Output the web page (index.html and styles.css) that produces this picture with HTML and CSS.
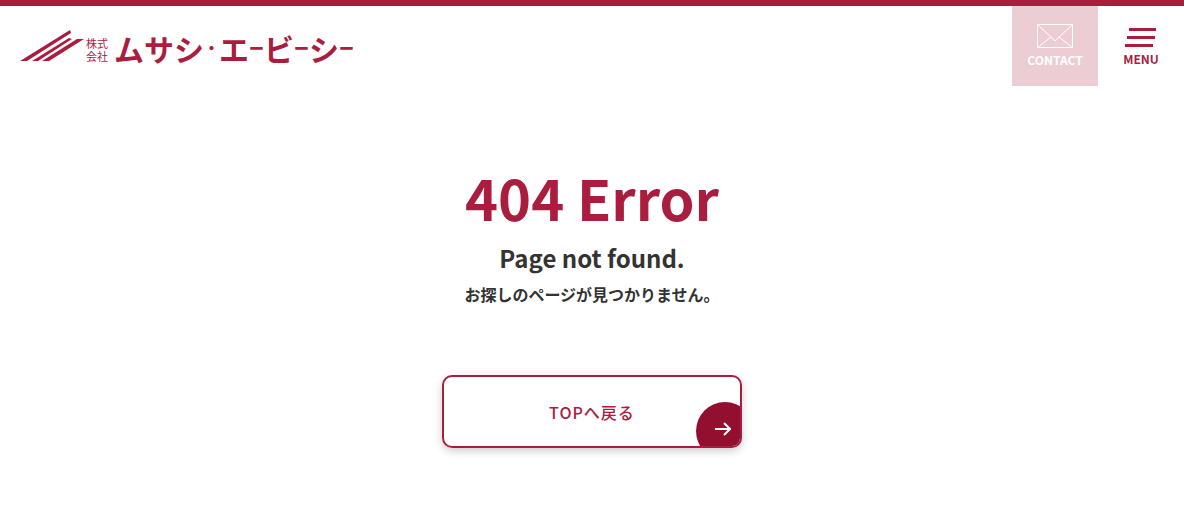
FILE: index.html
```html
<!DOCTYPE html>
<html lang="ja">
<head>
    <meta charset="UTF-8">
    <meta name="viewport" content="width=device-width, initial-scale=1.0">
    <title>404 Error | 株式会社ムサシ・エービーシー</title>
    <link rel="stylesheet" href="styles.css">
</head>
<body>
    <header class="header">
        <a href="/" class="logo">
            <svg class="logo-mark" viewBox="0 0 64 32" width="64" height="32" fill="currentColor" aria-hidden="true">
                <path d="M0 31 50 0l1 3L7 31z"/>
                <path d="M12 31 49 8l3 1L18 31z"/>
                <path d="M22 31 57 9h7L29 31z"/>
            </svg>
            <span class="logo-prefix">株式<br>会社</span>
            <span class="logo-name">ムサシ<small>・</small>エ<small>ー</small>ビ<small>ー</small>シ<small>ー</small></span>
        </a>
        <nav class="header-nav">
            <a href="/contact/" class="contact">
                <svg viewBox="0 0 36 24" width="36" height="24" fill="none" stroke="currentColor" aria-hidden="true">
                    <path d="M.5.5h35v23H.5zM.5.5 18 17 35.5.5M.5 23.500 14 13M35.500 23.500 22 13"/>
                </svg>
                CONTACT
            </a>
            <button type="button" class="menu">
                <svg viewBox="0 0 32 20" width="32" height="20" fill="currentColor" aria-hidden="true">
                    <path d="M4 0h27v3H4zM2 8h28v3H2zM0 16h28v3H0z"/>
                </svg>
                MENU
            </button>
        </nav>
    </header>

    <main class="error">
        <h1>404 Error</h1>
        <h2>Page not found.</h2>
        <p>お探しのページが見つかりません。</p>
        <a href="/" class="button">
            TOPへ戻る
            <span class="button-arrow">
                <svg viewBox="0 0 16 14" width="16" height="14" fill="none" stroke="currentColor" stroke-width="2" aria-hidden="true">
                    <path d="M0 7h15M9 1l6 6-6 6"/>
                </svg>
            </span>
        </a>
    </main>
</body>
</html>
```
FILE: styles.css
```css
* {
    box-sizing: border-box;
}
body {
    margin: 0;
    border-top: 6px solid #ab1d3f;
    background-color: #fff;
    color: #333;
    font-family: "Noto Sans CJK JP", sans-serif;
    font-size: 16px;
}
a {
    color: inherit;
    text-decoration: none;
}
.header {
    display: flex;
    justify-content: space-between;
    color: #ab1d3f;
}
.logo {
    display: flex;
    align-items: center;
    height: 80px;
    padding-left: 20px;
}
.logo-prefix {
    margin: 7px 6px 0 2px;
    font-size: 11px;
    line-height: 13px;
}
.logo-name {
    display: flex;
    align-items: center;
    margin-top: 4px;
    font-size: 30px;
    font-weight: bold;
    line-height: 32px;
}
.logo-name small {
    font-size: 15px;
    font-weight: 900;
}
.header-nav {
    display: flex;
}
.contact,
.menu {
    display: flex;
    flex-direction: column;
    align-items: center;
    width: 86px;
    height: 80px;
    padding: 18px 0 0;
    font-size: 12px;
    font-weight: bold;
    line-height: 24px;
}
.contact {
    background-color: #eccdd4;
    color: #fff;
}
.menu {
    padding-top: 22px;
    border: none;
    background: none;
    color: #ab1d3f;
    font-family: inherit;
    line-height: 22px;
    cursor: pointer;
}
.error {
    padding: 64px 20px 80px;
    text-align: center;
}
.error h1 {
    margin: 0;
    color: #ab1d3f;
    font-size: 56px;
    line-height: 94px;
}
.error h2 {
    margin: 0;
    font-size: 24px;
    line-height: 28px;
}
.error p {
    margin: 10px 0 69px;
    font-weight: bold;
    line-height: 24px;
}
.button {
    position: relative;
    display: flex;
    align-items: center;
    justify-content: center;
    width: 300px;
    height: 73px;
    margin: 0 auto;
    overflow: hidden;
    border: 2px solid #ab1d3f;
    border-radius: 10px;
    box-shadow: 0 3px 8px rgba(0, 0, 0, 0.2);
    color: #ab1d3f;
    font-weight: 500;
    line-height: 24px;
    letter-spacing: 1px;
}
.button-arrow {
    position: absolute;
    right: -14px;
    bottom: -14px;
    display: flex;
    padding: 20px 0 0 19px;
    width: 58px;
    height: 58px;
    border-radius: 50%;
    background-color: #930f2f;
    color: #fff;
}
```
